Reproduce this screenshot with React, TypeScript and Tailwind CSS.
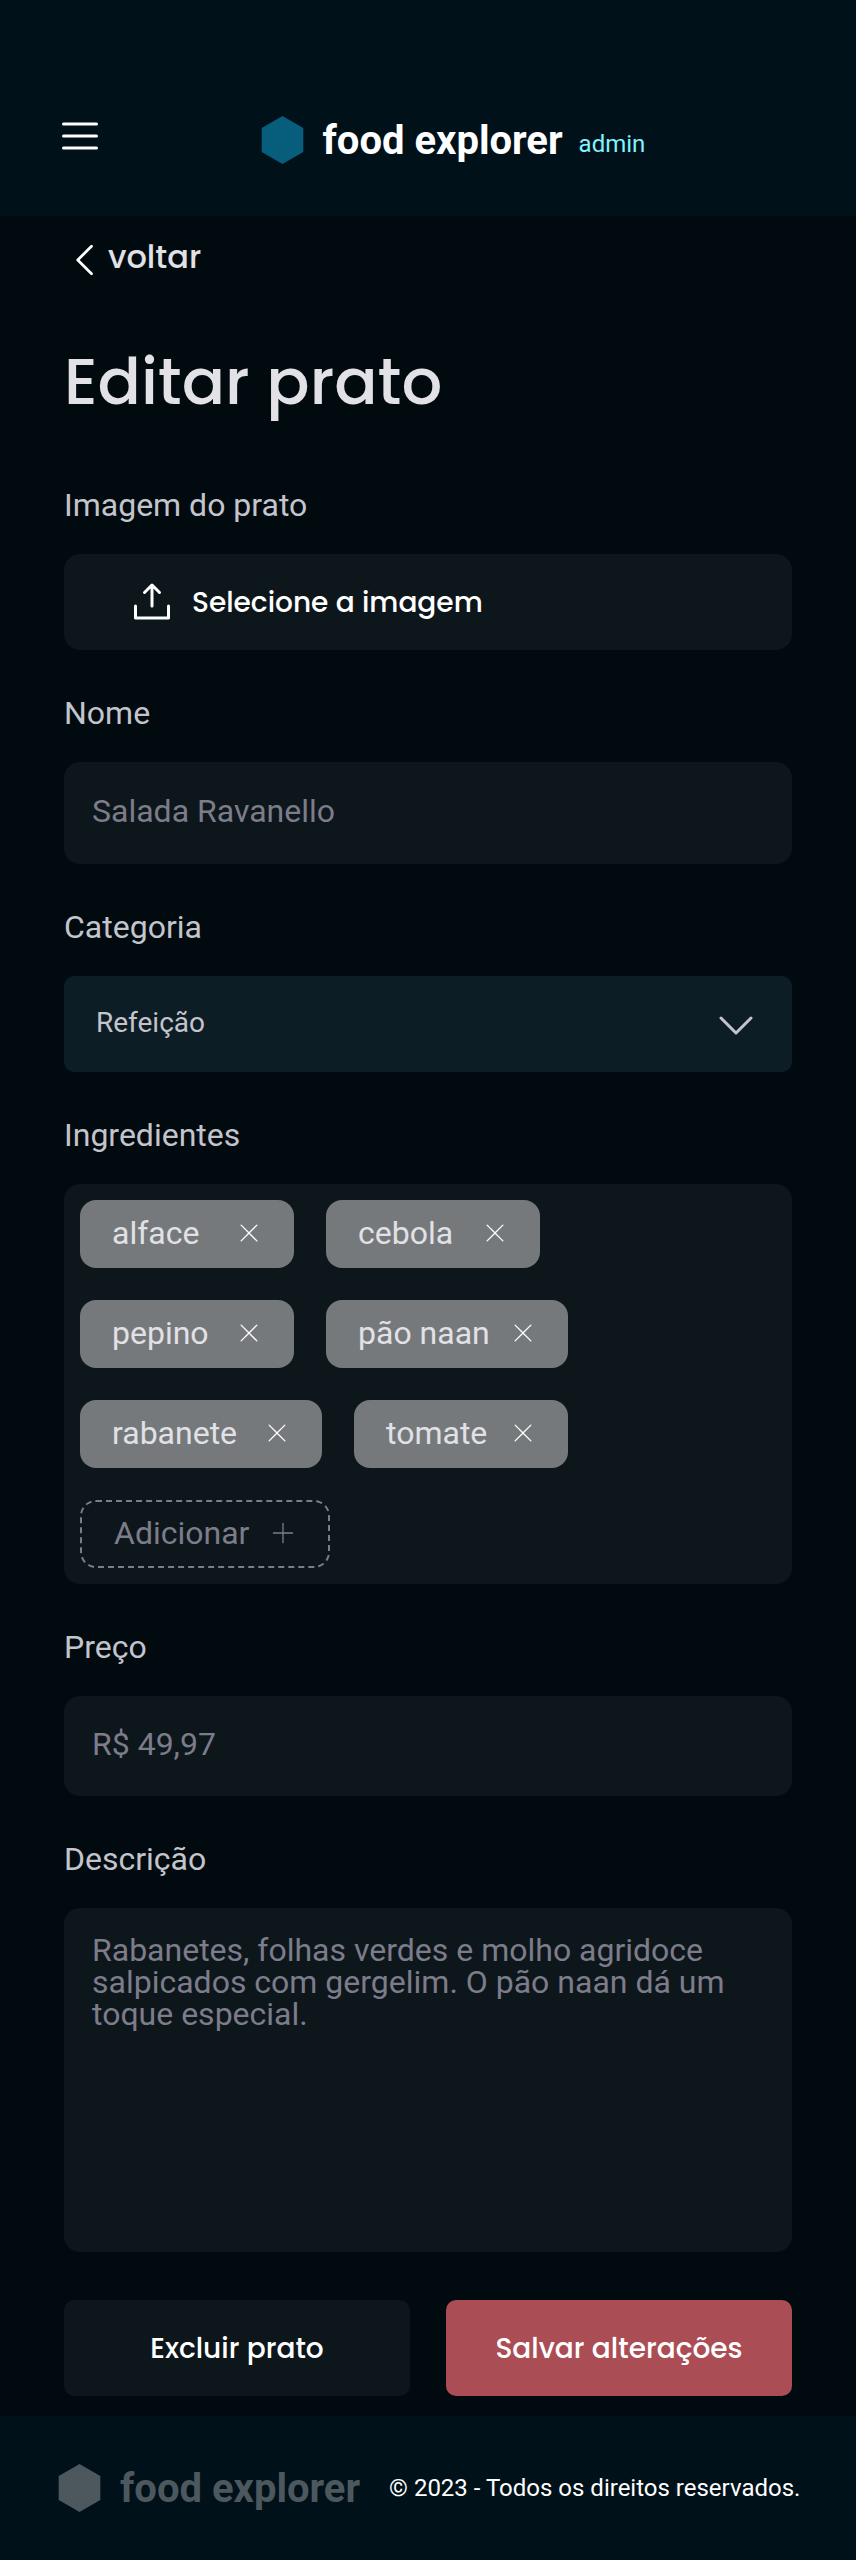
import type { ReactNode } from "react";
import { PiCaretDown, PiCaretLeft, PiList, PiPlusLight, PiUploadSimple, PiXLight } from "react-icons/pi";

const display = "font-['Poppins','Inter',sans-serif] font-medium";

function Hexagon({ className }: { className: string }) {
  return (
    <svg viewBox="0 0 43 48" className={`h-12 w-[43px] ${className}`}>
      <path d="M21.5 0 42.3 12v24L21.5 48 .7 36V12Z" fill="currentColor" />
    </svg>
  );
}

function Field({ label, children }: { label: string; children: ReactNode }) {
  return (
    <section className="mb-[47px]">
      <h2 className="mb-[33px] text-[32px] leading-8 text-[#c4c4cc]">{label}</h2>
      {children}
    </section>
  );
}

function Chip({ name, wide }: { name: string; wide?: boolean }) {
  return (
    <div
      className={`flex h-[68px] items-center justify-between rounded-2xl bg-[#76797b] pr-[31px] pb-0.5 pl-8 text-[32px] leading-8 text-[#e1e1e6] ${wide ? "w-[242px]" : "w-[214px]"}`}
    >
      <span className="whitespace-nowrap">{name}</span>
      <PiXLight className="size-7 shrink-0 text-white" />
    </div>
  );
}

export default function App() {
  return (
    <div className="flex h-[2560px] w-[856px] flex-col bg-[#000a0f] font-['Roboto',sans-serif]">
      <header className="flex h-[216px] items-start bg-[#00111a] pt-28 pl-14">
        <PiList className="size-12 text-white" />
        <div className="mt-1 ml-[157px] flex h-12 items-center">
          <Hexagon className="text-[#065e7c]" />
          <span className="mt-0.5 ml-[18.5px] text-[40px] leading-[48px] font-bold whitespace-nowrap text-white">food explorer</span>
          <span className="mt-[7px] ml-4 text-2xl text-[#82f3ff]">admin</span>
        </div>
      </header>

      <main className="flex grow flex-col px-16">
        <a className="mt-[22px] flex h-11 items-center">
          <PiCaretLeft className="size-11 text-white" />
          <span className={`mb-1.5 text-[32px] leading-8 text-[#e1e1e6] ${display}`}>voltar</span>
        </a>
        <h1 className={`mt-[60px] mb-[67px] text-[64px] leading-[80px] text-[#e1e1e6] ${display}`}>Editar prato</h1>

        <Field label="Imagem do prato">
          <div className="flex h-24 items-center gap-4 rounded-2xl bg-[#0d161b] pt-0.5 pl-16">
            <PiUploadSimple className="size-12 text-white" />
            <span className={`text-[28px] leading-8 text-white ${display}`}>Selecione a imagem</span>
          </div>
        </Field>
        <Field label="Nome">
          <div className="flex h-[102px] items-center rounded-2xl bg-[#0d161b] px-7 text-[32px] leading-8 text-[#7c7c8a]">
            <span className="-mt-1">Salada Ravanello</span>
          </div>
        </Field>
        <Field label="Categoria">
          <div className="flex h-24 items-center justify-between rounded-[10px] bg-[#0d1d25] px-8 text-[28px] leading-8 text-[#c4c4cc]">
            <span className="-mt-0.5">Refeição</span>
            <PiCaretDown className="size-12" />
          </div>
        </Field>
        <Field label="Ingredientes">
          <div className="flex h-[400px] flex-col gap-8 rounded-2xl bg-[#0d161b] p-4">
            <div className="flex gap-8">
              <Chip name="alface" />
              <Chip name="cebola" />
            </div>
            <div className="flex gap-8">
              <Chip name="pepino" />
              <Chip name="pão naan" wide />
            </div>
            <div className="flex gap-8">
              <Chip name="rabanete" wide />
              <Chip name="tomate" />
            </div>
            <div className="flex h-[68px] w-[250px] items-center justify-between rounded-2xl border-2 border-dashed border-[#7c7c8a] pr-[31px] pb-0.5 pl-8 text-[32px] leading-8 text-[#7c7c8a]">
              <span>Adicionar</span>
              <PiPlusLight className="size-7" />
            </div>
          </div>
        </Field>
        <Field label="Preço">
          <div className="flex h-[100px] items-center rounded-2xl bg-[#0d161b] px-7 text-[32px] leading-8 text-[#7c7c8a]">
            <span className="-mt-1">R$ 49,97</span>
          </div>
        </Field>
        <Field label="Descrição">
          <div className="h-[344px] rounded-2xl bg-[#0d161b] px-7 pt-[26px] text-[32px] leading-8 text-[#7c7c8a]">
            Rabanetes, folhas verdes e molho agridoce salpicados com gergelim. O pão naan dá um toque especial.
          </div>
        </Field>
        <div className={`mt-px grid grid-cols-2 gap-9 text-[28px] text-white ${display}`}>
          <button className="h-24 rounded-[10px] bg-[#0d161b] pt-0.5">Excluir prato</button>
          <button className="h-24 rounded-[10px] bg-[#ab4d55] pt-0.5">Salvar alterações</button>
        </div>
      </main>

      <footer className="flex h-36 items-center bg-[#00111a] pl-[58px]">
        <Hexagon className="text-[#4d585e]" />
        <span className="mt-0.5 ml-[19px] text-[40px] leading-[48px] font-bold whitespace-nowrap text-[#4d585e]">food explorer</span>
        <span className="ml-[29px] text-2xl whitespace-nowrap text-white">© 2023 - Todos os direitos reservados.</span>
      </footer>
    </div>
  );
}
